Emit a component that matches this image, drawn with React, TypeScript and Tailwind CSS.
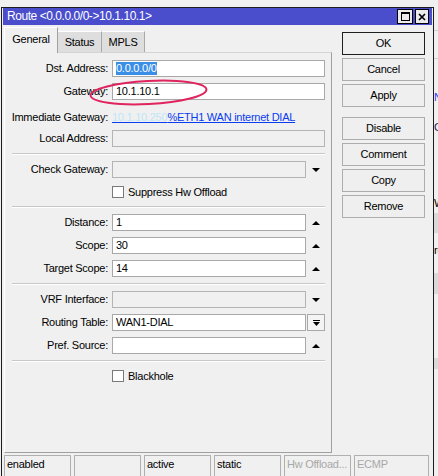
import React from 'react'

const Down = () => <div className="h-0 w-0 border-x-4 border-t-4 border-x-transparent border-t-black" />
const Up = () => <div className="h-0 w-0 border-x-4 border-b-4 border-x-transparent border-b-black" />

function Row({ label, children }: { label: string; children?: React.ReactNode }) {
  return (
    <div className="flex h-[17px] items-center">
      <div className="w-[103px] shrink-0 whitespace-nowrap text-right leading-[17px]">{label}</div>
      <div className="ml-[4px] flex h-[17px] flex-1 items-center">{children}</div>
    </div>
  )
}

function Box({ children, gray }: { children?: React.ReactNode; gray?: boolean }) {
  return (
    <div
      className={
        gray
          ? 'h-[17px] flex-1 border border-[#b4b4b4] bg-[#f0f0f0] pl-[3px] leading-[15px]'
          : 'h-[17px] flex-1 border border-[#a8a8a8] bg-white pl-[3px] leading-[15px]'
      }
    >
      {children}
    </div>
  )
}

const Sep = () => <div className="ml-[7px] h-[2px] border-t border-b border-t-[#c8c8c8] border-b-white" />

function Check({ label }: { label: string }) {
  return (
    <div className="flex h-[16px] items-center pl-[107px]">
      <div className="h-[12px] w-[12px] border border-[#7a7a7a] bg-white" />
      <span className="ml-[4px] leading-[16px]">{label}</span>
    </div>
  )
}

function Btn({ label, def }: { label: string; def?: boolean }) {
  return (
    <div
      className={
        def
          ? 'flex h-[23px] items-center justify-center border border-[#1e1e1e] bg-[#efefef]'
          : 'flex h-[23px] items-center justify-center border border-[#adadad] bg-[#efefef]'
      }
    >
      {label}
    </div>
  )
}

function Cell({ text, w, dim }: { text: string; w: string; dim?: boolean }) {
  return (
    <div className={`${w} h-[24px] shrink-0 border border-[#b0b0b0] pl-[2px] leading-[17px] ${dim ? 'text-[#a8a8a8]' : 'text-black'}`}>
      {text}
    </div>
  )
}

export default function App() {
  return (
    <div className="relative flex h-[476px] w-[438px] overflow-hidden bg-[#f0f0f0] font-['Liberation_Sans',Arial,sans-serif] text-[11px] tracking-[-0.25px] text-black">
      <div className="ml-[1px] mt-[7px] flex w-[433px] shrink-0 flex-col border-x border-t border-[#1c1c1c] bg-[#f0f0f0] px-[1px]">
        {/* title bar */}
        <div className="flex h-[17px] items-center bg-[#4a4ecc] pl-[4px] pr-[3px] text-[12px] tracking-[-0.45px] text-white">
          <span className="flex-1 leading-[17px]">Route &lt;0.0.0.0/0-&gt;10.1.10.1&gt;</span>
          <div className="flex gap-[2px]">
            <div className="flex h-[15px] w-[16px] items-center justify-center border border-black bg-[#ececec]">
              <div className="h-[9px] w-[9px] border border-t-2 border-black" />
            </div>
            <div className="flex h-[15px] w-[14px] items-center justify-center border border-black bg-[#ececec]">
              <svg width="8" height="8" viewBox="0 0 8 8">
                <path d="M1 1L7 7M7 1L1 7" stroke="black" strokeWidth="1.7" />
              </svg>
            </div>
          </div>
        </div>

        {/* body */}
        <div className="flex">
          <div className="flex w-[329px] flex-col pl-[1px]">
            <div className="flex h-[27px] items-end">
              <div className="relative z-10 -mb-px flex h-[26px] w-[54px] items-center justify-center border-l border-t border-r border-l-white border-t-white border-r-[#a0a0a0] bg-[#f0f0f0] pb-[2px]">
                General
              </div>
              <div className="flex h-[21px] w-[44px] items-center justify-center border-t border-r border-t-white border-r-[#a8a8a8] bg-[#dedede]">
                Status
              </div>
              <div className="flex h-[21px] w-[43px] items-center justify-center border-t border-r border-t-white border-r-[#a8a8a8] bg-[#dedede]">
                MPLS
              </div>
            </div>
            <div className="h-[401px] border border-l-white border-t-[#d4d4d4] border-r-[#a0a0a0] border-b-[#a0a0a0]">
              <div className="flex flex-col gap-[6px] pr-[6px] pt-[7px]">
                <Row label="Dst. Address:">
                  <Box>
                    <span className="inline-block bg-[#3a8ee6] leading-[13px] text-white">0.0.0.0/0</span>
                  </Box>
                </Row>
                <Row label="Gateway:">
                  <Box>10.1.10.1</Box>
                </Row>
                <div className="flex h-[18px] pt-[5px] leading-[13px]">
                  <div className="w-[103px] shrink-0 whitespace-nowrap text-right">Immediate Gateway:</div>
                  <div className="ml-[4px] whitespace-nowrap text-[#0a3cf0] underline decoration-[#0a3cf0]">
                    <span className="text-[#bfe6f8]">10.1.10.250</span>%ETH1 WAN internet DIAL
                  </div>
                </div>
                <Row label="Local Address:">
                  <Box gray />
                </Row>
                <Sep />
                <Row label="Check Gateway:">
                  <Box gray />
                  <div className="flex w-[19px] shrink-0 justify-center">
                    <Down />
                  </div>
                </Row>
                <Check label="Suppress Hw Offload" />
                <Sep />
                <Row label="Distance:">
                  <Box>1</Box>
                  <div className="flex w-[19px] shrink-0 justify-center">
                    <Up />
                  </div>
                </Row>
                <Row label="Scope:">
                  <Box>30</Box>
                  <div className="flex w-[19px] shrink-0 justify-center">
                    <Up />
                  </div>
                </Row>
                <Row label="Target Scope:">
                  <Box>14</Box>
                  <div className="flex w-[19px] shrink-0 justify-center">
                    <Up />
                  </div>
                </Row>
                <Sep />
                <Row label="VRF Interface:">
                  <Box gray />
                  <div className="flex w-[19px] shrink-0 justify-center">
                    <Down />
                  </div>
                </Row>
                <Row label="Routing Table:">
                  <Box>WAN1-DIAL</Box>
                  <div className="ml-[1px] flex h-[17px] w-[18px] shrink-0 items-center justify-center border border-[#a8a8a8] bg-[#f4f4f4]">
                    <svg width="7" height="6" viewBox="0 0 7 6">
                      <rect x="0" y="0" width="7" height="1" fill="black" />
                      <path d="M0 2H7L3.5 6Z" fill="black" />
                    </svg>
                  </div>
                </Row>
                <Row label="Pref. Source:">
                  <Box />
                  <div className="flex w-[19px] shrink-0 justify-center">
                    <Up />
                  </div>
                </Row>
                <Sep />
                <Check label="Blackhole" />
              </div>
            </div>
          </div>

          <div className="ml-[10px] flex w-[83px] flex-col gap-[3px] pt-[7px]">
            <Btn label="OK" def />
            <Btn label="Cancel" />
            <Btn label="Apply" />
            <div className="h-[4px]" />
            <Btn label="Disable" />
            <Btn label="Comment" />
            <Btn label="Copy" />
            <Btn label="Remove" />
          </div>
        </div>

        {/* status bar */}
        <div className="mt-[2px] flex gap-[3px] pl-[1px]">
          <Cell text="enabled" w="w-[67px]" />
          <Cell text="" w="w-[67px]" />
          <Cell text="active" w="w-[67px]" />
          <Cell text="static" w="w-[67px]" />
          <Cell text="Hw Offload..." w="w-[67px]" dim />
          <Cell text="ECMP" w="w-[75px]" dim />
        </div>
      </div>

      {/* edge of the window behind */}
      <div className="flex w-[4px] shrink-0 flex-col overflow-hidden whitespace-nowrap leading-[10px]">
        <div className="mt-[30px] h-px bg-[#cfcfcf]" />
        <div className="mt-[27px] h-px bg-[#cfcfcf]" />
        <div className="mt-[33px] text-[#1a3cff]">N</div>
        <div className="mt-[20px] text-[#202060]">C</div>
        <div className="mt-[66px] text-black">W</div>
        <div className="mt-[5px] h-[20px] bg-[#d9d9d9]" />
        <div className="mt-[12px] text-black">re</div>
        <div className="mt-[18px] h-[21px] bg-[#d9d9d9]" />
        <div className="mt-[64px] h-[11px] bg-[#d9d9d9]" />
      </div>

      {/* red marker ellipse */}
      <svg className="absolute left-[86px] top-[76px]" width="126" height="34" viewBox="0 0 126 34">
        <ellipse cx="62.5" cy="16.5" rx="58" ry="11.5" fill="none" stroke="#e0245e" strokeWidth="2" transform="rotate(-3 62.5 16.5)" />
      </svg>
    </div>
  )
}
